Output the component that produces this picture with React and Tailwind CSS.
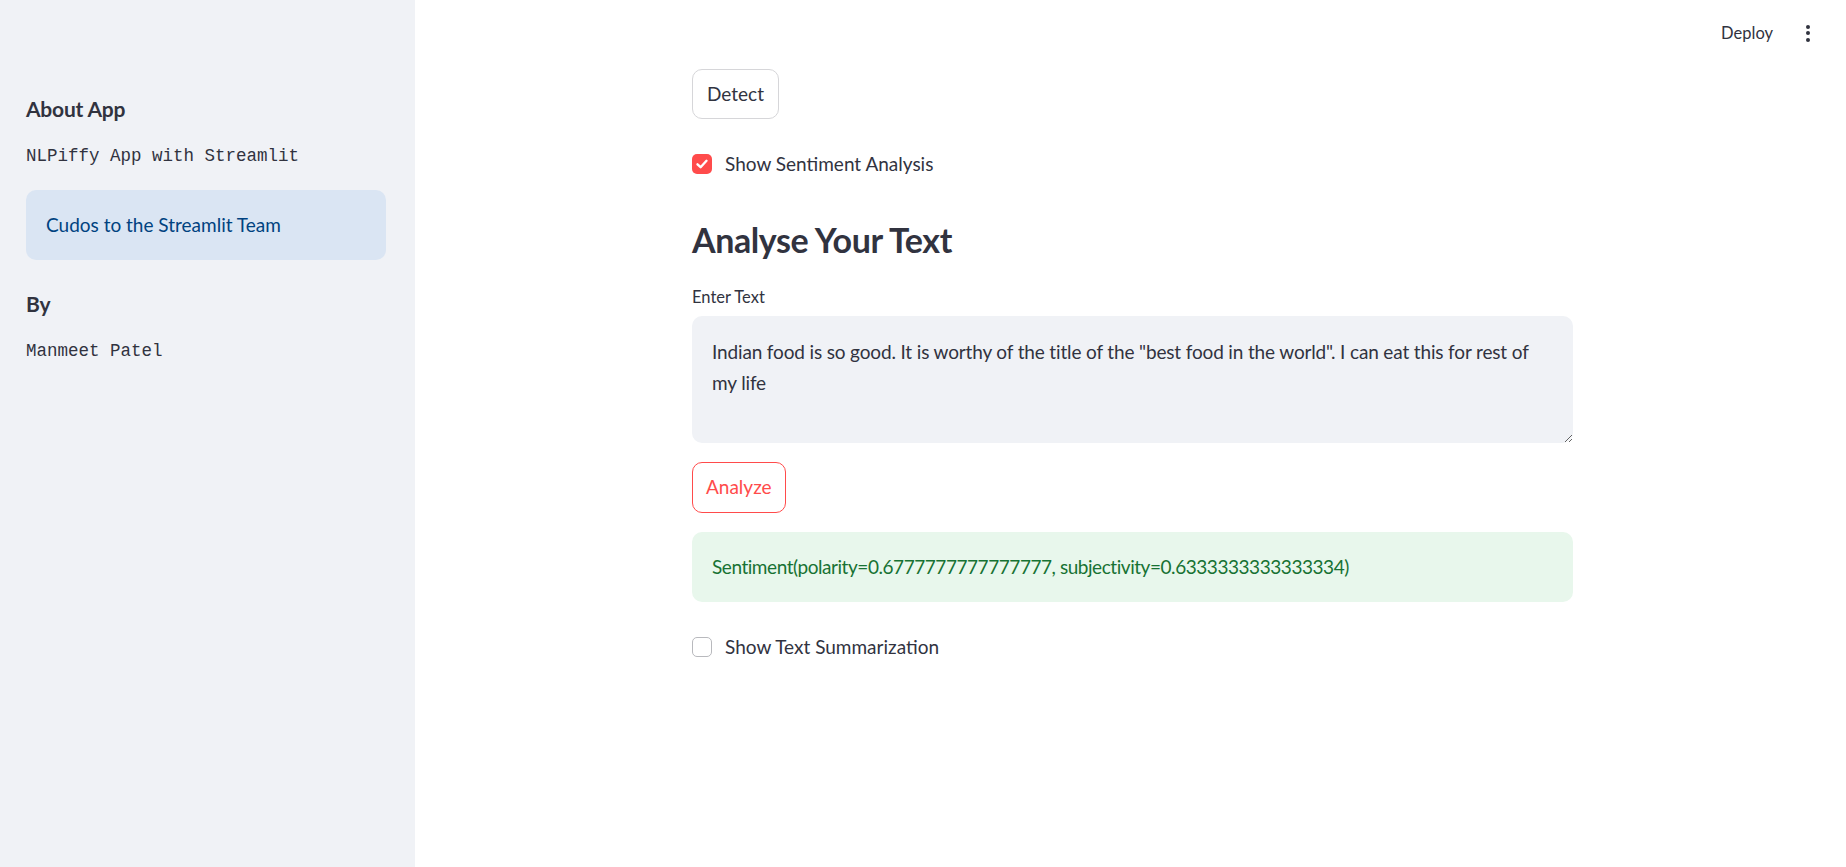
import { useState } from 'react'

const sans = "font-['Lato','Noto_Sans',sans-serif]"

function Checkbox({ checked, label, onChange }) {
  return (
    <label className="flex items-center gap-[13px] cursor-pointer select-none">
      <span
        onClick={onChange}
        className={
          checked
            ? 'w-5 h-5 rounded-[5px] bg-[#ff4b4b] flex items-center justify-center'
            : 'w-5 h-5 rounded-[5px] border border-[#b8b9bd] bg-white'
        }
      >
        {checked && (
          <svg width="14" height="14" viewBox="0 0 14 14">
            <path d="M2.5 7.3 L5.6 10.2 L11.5 3.8" fill="none" stroke="white" strokeWidth="2.4" strokeLinecap="round" strokeLinejoin="round" />
          </svg>
        )}
      </span>
      <span className="text-[19px] leading-[28px] text-[#31333f]">{label}</span>
    </label>
  )
}

export default function App() {
  const [sentiment, setSentiment] = useState(true)
  const [summary, setSummary]     = useState(false)

  return (
    <div className={`flex w-full h-[867px] bg-white text-[#31333f] ${sans}`}>
      {/* Sidebar */}
      <aside className="w-[415px] shrink-0 bg-[#f0f2f6] px-[26px] pt-[93px]">
        <h3 className="text-[21px] leading-[32px] font-bold tracking-[-0.2px]">About App</h3>
        <p className="mt-[17px] font-['Liberation_Mono',monospace] text-[17.5px] leading-[28px]">NLPiffy App with Streamlit</p>
        <div className="mt-[20px] w-[360px] h-[70px] rounded-[10px] bg-[#dae5f3] px-[20px] flex items-center">
          <span className="text-[19px] text-[#004280]">Cudos to the Streamlit Team</span>
        </div>
        <h3 className="mt-[28px] text-[21px] leading-[32px] font-bold">By</h3>
        <p className="mt-[17px] font-['Liberation_Mono',monospace] text-[17.5px] leading-[28px]">Manmeet Patel</p>
      </aside>

      {/* Main */}
      <main className="flex-1 flex flex-col">
        <header className="h-[66px] flex items-center justify-end gap-[33px] pr-[36px]">
          <button className="text-[16.5px] text-[#31333f]">Deploy</button>
          <span className="flex flex-col gap-[2.5px]">
            <span className="w-[4px] h-[4px] rounded-full bg-[#31333f]" />
            <span className="w-[4px] h-[4px] rounded-full bg-[#31333f]" />
            <span className="w-[4px] h-[4px] rounded-full bg-[#31333f]" />
          </span>
        </header>

        <div className="w-[881px] mx-auto translate-x-[2px] mt-[3px] flex flex-col">
          <button className="self-start h-[50px] px-[14px] rounded-[10px] border border-[#d6d6d9] bg-white text-[19px]">
            Detect
          </button>

          <div className="mt-[31px]">
            <Checkbox checked={sentiment} label="Show Sentiment Analysis" onChange={() => setSentiment(!sentiment)} />
          </div>

          <h2 className="mt-[38px] text-[34px] leading-[48px] font-bold tracking-[-0.4px]">Analyse Your Text</h2>

          <label className="mt-[22px] text-[16.5px] leading-[22px]">Enter Text</label>
          <textarea
            className="mt-[8px] h-[127px] w-full rounded-[10px] bg-[#f0f2f6] px-[20px] py-[20px] text-[19px] leading-[31px] tracking-[-0.15px] text-[#31333f] outline-none resize-y"
            defaultValue={'Indian food is so good. It is worthy of the title of the "best food in the world". I can eat this for rest of my life'}
          />

          <button className="mt-[19px] self-start h-[51px] px-[13px] rounded-[10px] border border-[#ff4b4b] bg-white text-[19px] text-[#ff4b4b]">
            Analyze
          </button>

          <div className="mt-[19px] h-[70px] rounded-[10px] bg-[#e8f7ec] px-[20px] flex items-center">
            <span className="text-[19px] tracking-[-0.45px] text-[#177233]">
              Sentiment(polarity=0.6777777777777777, subjectivity=0.6333333333333334)
            </span>
          </div>

          <div className="mt-[31px]">
            <Checkbox checked={summary} label="Show Text Summarization" onChange={() => setSummary(!summary)} />
          </div>
        </div>
      </main>
    </div>
  )
}
